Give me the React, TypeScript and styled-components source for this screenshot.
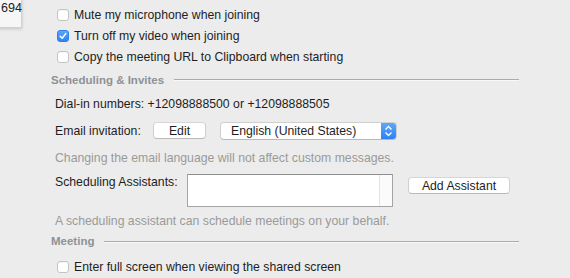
import React from "react";
import styled, { createGlobalStyle } from "styled-components";

const Global = createGlobalStyle`
  html, body { margin: 0; padding: 0; background: #ececec; }
  body { font-family: "Liberation Sans", Arial, sans-serif; }
`;

const Page = styled.div`
  position: relative;
  width: 570px;
  height: 278px;
  overflow: hidden;
  background: #ececec;
  color: #1e1e1e;
  font-size: 12.25px;
`;

const Tip = styled.div`
  position: absolute;
  left: -8px;
  top: -6px;
  width: 30px;
  height: 34px;
  background: #f6f6f6;
  border: 1px solid #d2d2d2;
  box-shadow: 0 1px 3px rgba(0, 0, 0, 0.18);
  display: flex;
  align-items: flex-start;
  padding: 6px 0 0 8px;
  box-sizing: border-box;
  font-size: 12.5px;
  color: #222;
`;

const Content = styled.div`
  display: flex;
  flex-direction: column;
  padding: 4px 0 0 51px;
`;

const CheckRow = styled.label<{ $h?: number; $top?: number }>`
  display: flex;
  align-items: center;
  gap: 5px;
  height: ${(p) => p.$h ?? 21}px;
  margin-top: ${(p) => p.$top ?? 0}px;
  padding-left: 6px;
`;

const Box = styled.span<{ $on?: boolean }>`
  width: 12px;
  height: 12px;
  box-sizing: border-box;
  border-radius: 3px;
  flex: none;
  display: flex;
  align-items: center;
  justify-content: center;
  background: ${(p) => (p.$on ? "linear-gradient(#5aa6fb, #2f84f6)" : "#ffffff")};
  border: 1px solid ${(p) => (p.$on ? "#2f7fe8" : "#c4c4c4")};
  box-shadow: ${(p) => (p.$on ? "none" : "inset 0 1px 0 rgba(0,0,0,0.04)")};
`;

const Header = styled.div<{ $h: number }>`
  display: flex;
  align-items: center;
  height: ${(p) => p.$h}px;
  gap: 10px;
  padding-right: 51px;
  color: #8d9297;
  font-weight: 700;
  font-size: 11.5px;
`;

const Rule = styled.div`
  flex: 1;
  height: 1px;
  background: #a8acb0;
  box-shadow: 0 1px 0 #f8f8f8;
`;

const Line = styled.div<{ $h: number; $grey?: boolean }>`
  display: flex;
  align-items: center;
  height: ${(p) => p.$h}px;
  padding-left: 4px;
  color: ${(p) => (p.$grey ? "#9a9a9a" : "#1e1e1e")};
`;

const EmailRow = styled.div`
  display: flex;
  align-items: center;
  height: 29px;
  padding-left: 4px;
`;

const EmailLabel = styled.span`
  width: 98px;
`;

const Btn = styled.div<{ $w: number }>`
  width: ${(p) => p.$w}px;
  height: 17px;
  box-sizing: border-box;
  background: #ffffff;
  border: 1px solid #cfcfcf;
  border-top-color: #d6d6d6;
  border-bottom-color: #b9b9b9;
  border-radius: 4px;
  display: flex;
  align-items: center;
  justify-content: center;
  color: #1e1e1e;
`;

const Select = styled.div`
  margin-left: 14px;
  width: 177px;
  height: 18px;
  box-sizing: border-box;
  background: #ffffff;
  border: 1px solid #cfcfcf;
  border-bottom-color: #b9b9b9;
  border-radius: 4px;
  display: flex;
  align-items: center;
  overflow: hidden;
`;

const SelectText = styled.span`
  flex: 1;
  padding-left: 10px;
`;

const Stepper = styled.span`
  width: 15px;
  height: 100%;
  background: linear-gradient(#5ea8fb, #2c80f5);
  display: flex;
  align-items: center;
  justify-content: center;
`;

const AssistRow = styled.div`
  display: flex;
  align-items: flex-start;
  height: 36px;
  padding-left: 4px;
  padding-top: 3px;
  box-sizing: border-box;
`;

const AssistLabel = styled.span`
  padding-top: 1px;
  width: 132px;
`;

const TextBox = styled.div`
  width: 206px;
  height: 33px;
  box-sizing: border-box;
  background: #ffffff;
  border: 1px solid #a4a4a4;
  border-top-color: #8e8e8e;
  display: flex;
  justify-content: flex-end;
`;

const Scroll = styled.div`
  width: 12px;
  height: 100%;
  background: #fbfbfb;
  border-left: 1px solid #e4e4e4;
`;

const AddBtn = styled(Btn)`
  margin-left: 15px;
  margin-top: 3px;
`;

export default function App() {
  return (
    <Page>
      <Global />
      <Tip>694</Tip>
      <Content>
        <CheckRow>
          <Box />
          <span>Mute my microphone when joining</span>
        </CheckRow>
        <CheckRow>
          <Box $on>
            <svg width="8" height="8" viewBox="0 0 8 8">
              <path d="M1.2 4.2 L3.2 6.2 L6.8 1.6" fill="none" stroke="#fff" strokeWidth="1.5" strokeLinecap="round" strokeLinejoin="round" />
            </svg>
          </Box>
          <span>Turn off my video when joining</span>
        </CheckRow>
        <CheckRow>
          <Box />
          <span>Copy the meeting URL to Clipboard when starting</span>
        </CheckRow>
        <Header $h={25}>
          <span>Scheduling &amp; Invites</span>
          <Rule />
        </Header>
        <Line $h={24}>Dial-in numbers: +12098888500 or +12098888505</Line>
        <EmailRow>
          <EmailLabel>Email invitation:</EmailLabel>
          <Btn $w={53}>Edit</Btn>
          <Select>
            <SelectText>English (United States)</SelectText>
            <Stepper>
              <svg width="9" height="12" viewBox="0 0 9 12">
                <path d="M1.5 4.5 L4.5 1.5 L7.5 4.5 M1.5 7.5 L4.5 10.5 L7.5 7.5" fill="none" stroke="#fff" strokeWidth="1.4" />
              </svg>
            </Stepper>
          </Select>
        </EmailRow>
        <Line $h={26} $grey>Changing the email language will not affect custom messages.</Line>
        <AssistRow>
          <AssistLabel>Scheduling Assistants:</AssistLabel>
          <TextBox>
            <Scroll />
          </TextBox>
          <AddBtn $w={102}>Add Assistant</AddBtn>
        </AssistRow>
        <Line $h={28} $grey>A scheduling assistant can schedule meetings on your behalf.</Line>
        <Header $h={12}>
          <span>Meeting</span>
          <Rule />
        </Header>
        <CheckRow $h={18} $top={11}>
          <Box />
          <span>Enter full screen when viewing the shared screen</span>
        </CheckRow>
      </Content>
    </Page>
  );
}
